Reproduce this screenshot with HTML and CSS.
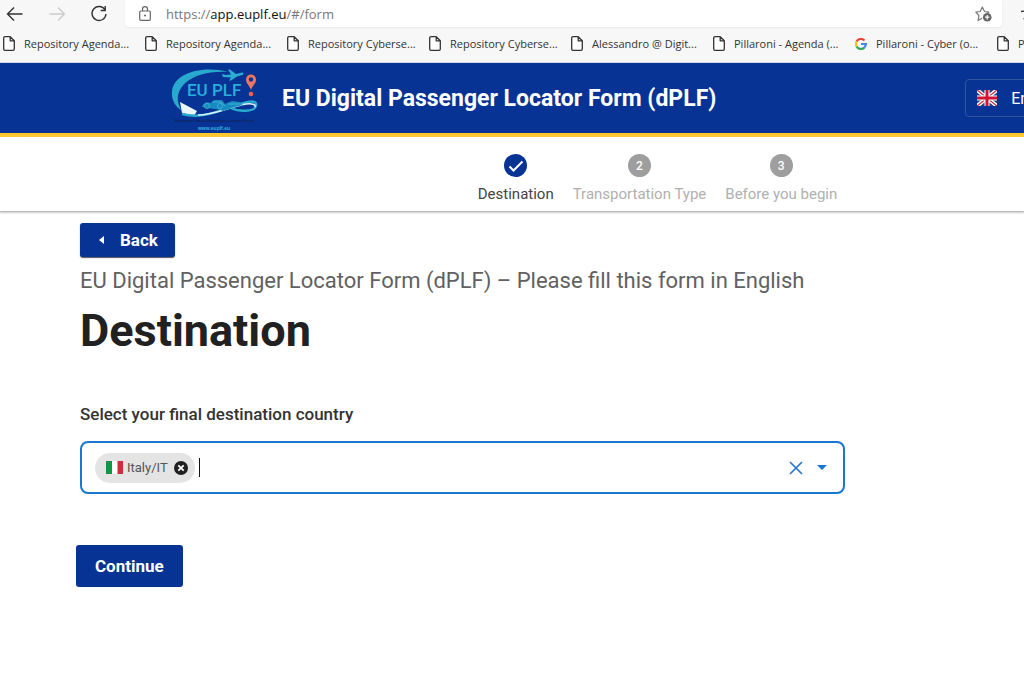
FILE: index.html
```html
<!DOCTYPE html>
<html lang="en">
<head>
<meta charset="utf-8">
<meta name="viewport" content="width=device-width, initial-scale=1">
<title>EU Digital Passenger Locator Form (dPLF)</title>
<link rel="stylesheet" href="styles.css">
</head>
<body>
<svg class="defs" width="0" height="0" aria-hidden="true">
  <symbol id="page" viewBox="0 0 12 15"><path d="M2 .7h5.2l4.1 4.1V13a1.3 1.3 0 0 1-1.3 1.3H2A1.3 1.3 0 0 1 .7 13V2A1.3 1.3 0 0 1 2 .7zM7.2.7v4.1h4.1" fill="#fff" stroke="#333" stroke-width="1.3" stroke-linejoin="round"/></symbol>
</svg>
<div class="browser">
  <div class="toolbar">
    <div class="nav">
      <button class="nav-button" aria-label="Go back"><svg width="18" height="16" viewBox="0 0 18 16"><path d="M16.500 8H1.500M8 1.500L1.500 8l6.500 6.500" fill="none" stroke="#333" stroke-width="1.400"/></svg></button>
      <button class="nav-button" aria-label="Go forward" disabled><svg width="18" height="16" viewBox="0 0 18 16"><path d="M1.500 8h15M10 1.500L16.500 8 10 14.500" fill="none" stroke="#ccc" stroke-width="1.400"/></svg></button>
      <button class="nav-button" aria-label="Reload"><svg width="18" height="18" viewBox="0 0 18 18"><path d="M15.200 5.200A7 7 0 1 0 16 9M15.200 1v4.500h-4.500" fill="none" stroke="#333" stroke-width="1.400"/></svg></button>
    </div>
    <div class="address">
      <svg width="12" height="15" viewBox="0 0 12 15"><path d="M2 5h8a1.300 1.300 0 0 1 1.300 1.300V13a1.300 1.300 0 0 1-1.300 1.300H2A1.300 1.300 0 0 1 .7 13V6.300A1.300 1.300 0 0 1 2 5zM3.500 5V3.200a2.500 2.500 0 0 1 5 0V5" fill="none" stroke="#666" stroke-width="1.200"/><circle cx="6" cy="9.600" r="1" fill="#666"/></svg>
      <span class="url">https://<span class="host">app.euplf.eu</span>/#/form</span>
      <button class="nav-button" aria-label="Add to favourites"><svg width="18" height="16" viewBox="0 0 18 16"><path d="M7 12.300l-3.900 2.200.8-5L.8 6.200l4.400-.7L7.300 1l2.200 4.500 4.400.7-2 2" fill="none" stroke="#777" stroke-width="1.200" stroke-linejoin="round"/><circle cx="12.200" cy="11.200" r="4.300" fill="#666"/><path d="M12.200 9v4.400M10 11.200h4.400" stroke="#fff" stroke-width="1.200"/></svg></button>
    </div>
    <svg class="star" width="16" height="16" viewBox="0 0 16 16" aria-hidden="true"><path d="M1 5.500L5.500 5 7.500 1l2 4 4.500.5-3.300 3 .8 4.500-4-2.200-4 2.200" fill="none" stroke="#333" stroke-width="1.400"/></svg>
  </div>
  <nav class="bookmarks" aria-label="Bookmarks">
    <a class="bookmark" href="#"><svg width="12" height="15"><use href="#page"/></svg>Repository Agenda...</a>
    <a class="bookmark" href="#"><svg width="12" height="15"><use href="#page"/></svg>Repository Agenda...</a>
    <a class="bookmark" href="#"><svg width="12" height="15"><use href="#page"/></svg>Repository Cyberse...</a>
    <a class="bookmark" href="#"><svg width="12" height="15"><use href="#page"/></svg>Repository Cyberse...</a>
    <a class="bookmark" href="#"><svg width="12" height="15"><use href="#page"/></svg>Alessandro @ Digit...</a>
    <a class="bookmark" href="#"><svg width="12" height="15"><use href="#page"/></svg>Pillaroni - Agenda (...</a>
    <a class="bookmark" href="#"><svg width="12" height="12" viewBox="0 0 12 12" fill="none" stroke-width="2.200"><path d="M1.600 3.500A4.900 4.900 0 0 1 9.500 2.500" stroke="#ea4335"/><path d="M1.600 8.500a4.900 4.900 0 0 1 0-5" stroke="#fbbc05"/><path d="M9.300 9.600a4.900 4.900 0 0 1-7.700-1.100" stroke="#34a853"/><path d="M6 6h4.900a4.900 4.900 0 0 1-1.600 3.600" stroke="#4285f4"/></svg>Pillaroni - Cyber (o...</a>
    <a class="bookmark" href="#"><svg width="12" height="15"><use href="#page"/></svg>P</a>
  </nav>
</div>

<header class="site-header">
  <svg class="logo" width="90" height="66" viewBox="0 0 90 66" role="img" aria-label="EU PLF">
    <path d="M58 7C30 0 3 9 2 27c-.5 8 3 14 9 18l-2-5C3 24 20 5 58 7z" fill="#2aa9cf"/>
    <path d="M10 37l17 9-3 5-12-3z" fill="#e9f6fb"/>
    <path d="M12 49c19 5 35-2 52-8 10-3.500 24-8 22 0-1.500 6-17 6-25 2" fill="none" stroke="#2aa9cf" stroke-width="2.400"/>
    <path d="M28 50c16 0 31-8 48-11 6-1 10 .5 9 3" fill="none" stroke="#dff2fa" stroke-width="1.500"/>
    <path d="M32 42c1-4 5-6 9-4l3-3h8l3 4 7-3 8 1 3 3-8 2-12 4c-7-3-14-2-21-4z" fill="#168bc0"/>
    <g fill="none" stroke="#3daed4" stroke-width="1"><circle cx="37" cy="41" r="2.500"/><circle cx="50" cy="41" r="2.500"/><path d="M42 37h9l4 4M58 39h14"/></g>
    <path d="M53 12l-1-3 4 1 5-.5-3-5h2l6 4.500 6-1.500c2 0 2 2 0 2.500l-5 1.500-6 4h-2l2-3z" fill="#2cadd2"/>
    <text class="logo-name" x="17" y="31" fill="#2aaedb">EU PLF</text>
    <path d="M81 25c-1.500-5-5-6-5-10.500a5 5 0 0 1 10 0c0 4.500-3.500 5.500-5 10.500z" fill="#ef7660"/><circle cx="81" cy="14.500" r="2.200" fill="#073394"/><circle cx="81" cy="29" r="2.300" fill="#ef604c"/>
    <text class="logo-caption" x="44" y="57" text-anchor="middle" fill="#142456">European Union Passenger Locator Form</text>
    <text class="logo-link" x="44" y="65" text-anchor="middle" fill="#31b1df">www.euplf.eu</text>
  </svg>
  <div class="site-title">EU Digital Passenger Locator Form (dPLF)</div>
  <button class="language"><svg width="20" height="16" viewBox="0 0 20 16"><path fill="#223f87" d="M0 0h20v16H0z"/><path d="M0 0l20 16M20 0L0 16" stroke="#fff" stroke-width="4"/><path d="M0 0l20 16M20 0L0 16" stroke="#d32540" stroke-width="1.300"/><path d="M10 0v16M0 8h20" stroke="#fff" stroke-width="5"/><path d="M10 0v16M0 8h20" stroke="#d01435" stroke-width="3"/></svg>English</button>
</header>

<ol class="stepper">
  <li class="step step-active"><span class="dot"><svg width="16" height="14" viewBox="0 0 16 14"><path d="M1.500 7.500l4 4 9-9" fill="none" stroke="#fff" stroke-width="2"/></svg></span>Destination</li>
  <li class="step"><span class="dot">2</span>Transportation Type</li>
  <li class="step"><span class="dot">3</span>Before you begin</li>
</ol>

<main class="content">
  <button class="button back"><svg width="5" height="8" viewBox="0 0 5 8"><path d="M5 0v8L0 4z" fill="#fff"/></svg>Back</button>
  <p class="subtitle">EU Digital Passenger Locator Form (dPLF) – Please fill this form in English</p>
  <h1 class="heading">Destination</h1>
  <form class="form">
    <label class="label" for="country">Select your final destination country</label>
    <div class="field">
      <span class="chip"><svg width="17" height="13" viewBox="0 0 17 13"><path fill="#fff" d="M0 0h17v13H0z"/><path fill="#159447" d="M0 0h6v13H0z"/><path fill="#d32b3d" d="M11.500 0H17v13h-5.500z"/></svg>Italy/IT<button class="icon-button remove" type="button" aria-label="Remove Italy"><svg width="14" height="14" viewBox="0 0 14 14"><circle cx="7" cy="7" r="7" fill="#202020"/><path d="M4.300 4.300l5.400 5.400m0-5.400L4.300 9.700" stroke="#fff" stroke-width="1.800"/></svg></button></span>
      <input class="country" id="country" type="text">
      <button class="icon-button" type="button" aria-label="Clear"><svg width="14" height="14" viewBox="0 0 14 14"><path d="M1 1l12 12M13 1L1 13" stroke="#2878ce" stroke-width="1.700"/></svg></button>
      <button class="icon-button open" type="button" aria-label="Open list"><svg width="10" height="5" viewBox="0 0 10 5"><path d="M0 0h10L5 5z" fill="#1976d2"/></svg></button>
    </div>
    <button class="button continue" type="button">Continue</button>
  </form>
</main>
</body>
</html>
```
FILE: styles.css
```css
* { box-sizing: border-box; }
body {
  margin: 0;
  background: #fff;
  color: #212121;
  font-family: Roboto, "Liberation Sans", sans-serif;
  overflow-x: hidden;
}
button { font-family: inherit; cursor: pointer; }
svg { display: block; flex-shrink: 0; }
.defs { position: absolute; }

.browser {
  background: #f7f7f7;
  border-bottom: 1px solid #d5d8e2;
  font-family: "Open Sans", "Noto Sans", sans-serif;
  overflow: hidden;
}
.toolbar { display: flex; height: 27px; }
.nav { display: flex; align-items: center; gap: 24px; width: 125px; padding-left: 6px; }
.nav-button { display: flex; padding: 0; border: 0; background: none; }
.address {
  display: flex;
  align-items: center;
  flex: 1;
  min-width: 0;
  padding: 0 9px 0 14px;
  gap: 15px;
  background: #fff;
  border-radius: 0 0 4px 4px;
  box-shadow: 0 1px 2px #e8e8e8;
}
.url { flex: 1; font-size: 12px; color: #777; }
.host { color: #111; }
.star { margin: 6px -12px 0 18px; }
.bookmarks { display: flex; height: 35px; padding: 0 0 2px 3px; }
.bookmark {
  display: flex;
  align-items: center;
  flex: 0 0 142px;
  gap: 9px;
  color: #333;
  font-size: 11px;
  text-decoration: none;
  white-space: nowrap;
}

.site-header {
  display: flex;
  align-items: center;
  height: 74px;
  padding-left: 170px;
  background: #073394;
  border-bottom: 4px solid #ffc82e;
  overflow: hidden;
}
.logo { margin-right: 22px; }
.logo-name { font: 500 17px Roboto, sans-serif; }
.logo-caption { font: 700 4px "Liberation Sans", sans-serif; }
.logo-link { font: 700 5px "Liberation Sans", sans-serif; }
.url { font-size: 13px; }
.site-title { flex: 1; color: #fff; font-size: 23px; font-weight: 700; white-space: nowrap; }
.language {
  display: flex;
  align-items: center;
  flex-shrink: 0;
  gap: 14px;
  height: 38px;
  margin-right: -56px;
  padding: 0 16px 0 11px;
  border: 1px solid #31559f;
  border-radius: 4px;
  background: none;
  color: #fff;
  font-size: 16px;
}

.stepper {
  display: flex;
  justify-content: center;
  gap: 19px;
  margin: 0;
  padding: 17px 0 6px 291px;
  list-style: none;
  border-bottom: 1px solid #b8bab9;
  box-shadow: 0 1px 2px #ccc;
}
.step {
  display: flex;
  flex-direction: column;
  align-items: center;
  gap: 6px;
  color: #b0b0b0;
  font-size: 15px;
  line-height: 22px;
}
.step-active { color: #444; }
.dot {
  display: flex;
  align-items: center;
  justify-content: center;
  width: 23px;
  height: 23px;
  border-radius: 50%;
  background: #9e9e9e;
  color: #fff;
  font-size: 12px;
  font-weight: 500;
}
.step-active .dot { background: #073394; }

.content { padding: 11px 80px 86px; }
.button {
  display: flex;
  align-items: center;
  justify-content: center;
  border: 0;
  border-radius: 3px;
  background: #073394;
  color: #fff;
  font-size: 17px;
  font-weight: 700;
}
.back { gap: 16px; height: 34px; padding: 0 17px 0 19px; box-shadow: 0 1px 1px #555; }
.subtitle { margin: 8px 0 0; color: #616161; font-size: 22px; line-height: 32px; }
.heading { margin: 8px 0 0; font-size: 45px; font-weight: 700; line-height: 52px; }
.form { max-width: 765px; margin-top: 45px; }
.label { display: block; color: #333; font-size: 17px; font-weight: 500; line-height: 24px; }
.field {
  display: flex;
  align-items: center;
  height: 53px;
  margin-top: 15px;
  padding: 0 16px 0 13px;
  border: 2px solid #1976d2;
  border-radius: 8px;
}
.chip {
  display: flex;
  align-items: center;
  gap: 4px;
  height: 30px;
  padding: 0 7px 0 11px;
  border-radius: 15px;
  background: #e4e4e4;
  color: #555;
  font-size: 13px;
}
.icon-button { display: flex; padding: 0; border: 0; background: none; }
.remove { margin-left: 2px; }
.open { margin-left: 14px; }
.country {
  flex: 1;
  min-width: 0;
  height: 19px;
  margin-left: 4px;
  border: 0;
  border-left: 1px solid #111;
  outline: 0;
  font-size: 16px;
}
.continue { height: 42px; margin: 51px 0 0 -4px; padding: 0 19px; }
```
